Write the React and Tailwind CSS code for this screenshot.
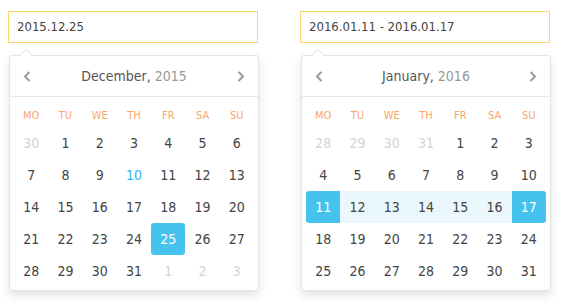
import React from "react";

const FONT = { fontFamily: '"DejaVu Sans Condensed", "DejaVu Sans", sans-serif', fontStretch: "condensed" };

function Chevron({ dir }) {
  return (
    <svg width="8" height="11" viewBox="0 0 8 11" className="block">
      {dir === "left" ? (
        <path d="M6.5 1 L2 5.5 L6.5 10" fill="none" stroke="#999" strokeWidth="2" />
      ) : (
        <path d="M1.5 1 L6 5.5 L1.5 10" fill="none" stroke="#999" strokeWidth="2" />
      )}
    </svg>
  );
}

const DAYS = ["MO", "TU", "WE", "TH", "FR", "SA", "SU"];

function Calendar({ value, month, year, cells }) {
  return (
    <div className="w-[250px]">
      <div className="h-[32px] border border-[#fcd56e] pl-2 flex items-center text-[13px] text-[#444]">
        {value}
      </div>
      <div className="relative mt-[12px] ml-px w-[250px] rounded-[3px] border border-[#e4e4e4] bg-white shadow-[0_4px_10px_rgba(0,0,0,0.12)]">
        <div className="absolute -top-[7px] left-[9px] w-0 h-0 border-l-[7px] border-r-[7px] border-b-[7px] border-l-transparent border-r-transparent border-b-[#dcdcdc]" />
        <div className="absolute -top-[6px] left-[10px] w-0 h-0 border-l-[6px] border-r-[6px] border-b-[6px] border-l-transparent border-r-transparent border-b-white" />
        <div className="h-[41px] border-b border-[#e8e8e8] flex items-center justify-between px-[13px]">
          <Chevron dir="left" />
          <div className="text-[14px] text-[#555]">
            {month}, <span className="text-[#999]">{year}</span>
          </div>
          <Chevron dir="right" />
        </div>
        <div className="px-[4px] pt-[9px] pb-[3px]">
          <div className="grid grid-cols-7 h-[21px] items-center">
            {DAYS.map((d) => (
              <div key={d} className="text-center text-[11px] text-[#f9a66b]">{d}</div>
            ))}
          </div>
          <div className="grid grid-cols-7">
            {cells.map((c, i) => {
              let cls = "h-[32px] flex items-center justify-center text-[14px] ";
              if (c.t === "muted") cls += "text-[#d4d4d4]";
              else if (c.t === "today") cls += "text-[#2db7f5]";
              else if (c.t === "sel") cls += "bg-[#45c3ee] text-white rounded-[3px]";
              else if (c.t === "selL") cls += "bg-[#45c3ee] text-white rounded-l-[3px]";
              else if (c.t === "selR") cls += "bg-[#45c3ee] text-white rounded-r-[3px]";
              else if (c.t === "range") cls += "bg-[#eaf7fd] text-[#444]";
              else cls += "text-[#444]";
              return (
                <div key={i} className={cls}>{c.d}</div>
              );
            })}
          </div>
        </div>
      </div>
    </div>
  );
}

function decCells() {
  const cells = [{ d: 30, t: "muted" }];
  for (let d = 1; d <= 31; d++) {
    let t = "n";
    if (d === 10) t = "today";
    if (d === 25) t = "sel";
    cells.push({ d, t });
  }
  [1, 2, 3].forEach((d) => cells.push({ d, t: "muted" }));
  return cells;
}

function janCells() {
  const cells = [28, 29, 30, 31].map((d) => ({ d, t: "muted" }));
  for (let d = 1; d <= 31; d++) {
    let t = "n";
    if (d === 11) t = "selL";
    else if (d === 17) t = "selR";
    else if (d > 11 && d < 17) t = "range";
    cells.push({ d, t });
  }
  return cells;
}

export default function App() {
  return (
    <div className="w-[562px] h-[305px] bg-white" style={FONT}>
      <div className="flex gap-[42px] pl-[8px] pt-[11px]">
        <Calendar value="2015.12.25" month="December" year="2015" cells={decCells()} />
        <Calendar value="2016.01.11 - 2016.01.17" month="January" year="2016" cells={janCells()} />
      </div>
    </div>
  );
}
